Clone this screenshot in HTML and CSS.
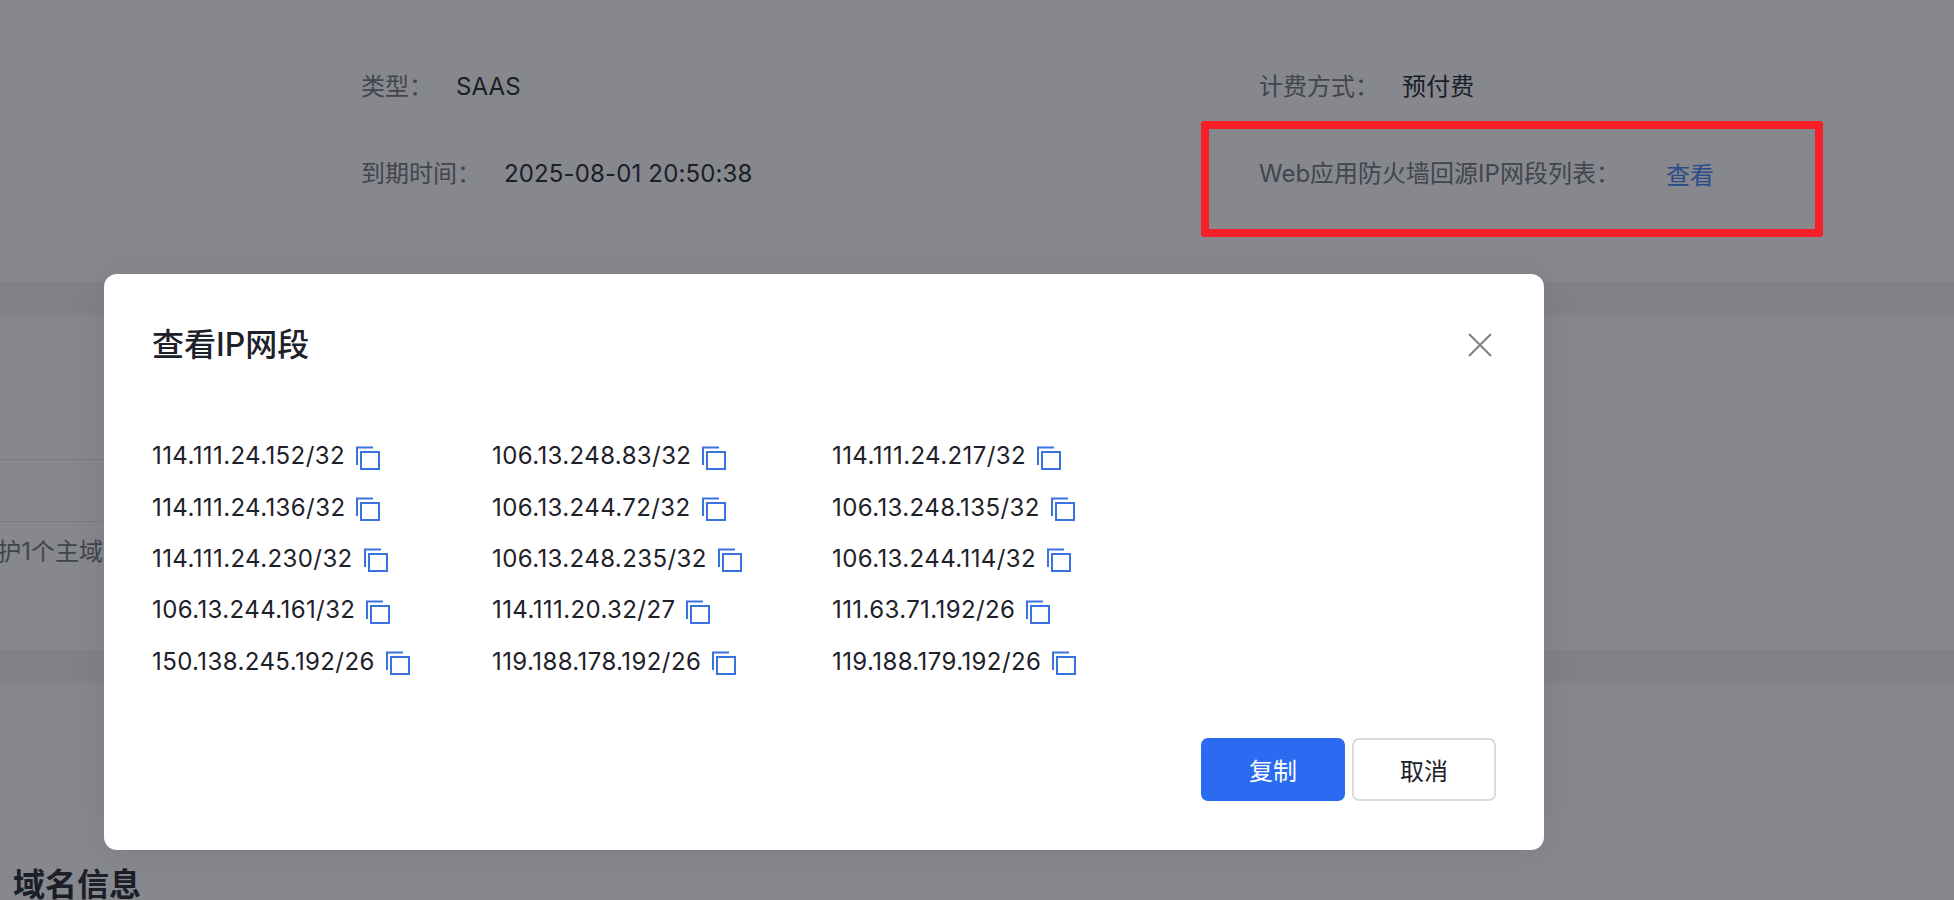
FILE: index.html
```html
<!DOCTYPE html>
<html lang="zh-CN">
<head>
  <meta charset="UTF-8" />
  <title>查看IP网段</title>
  <link rel="stylesheet" href="styles.css">
</head>
<body>
  <div class="page">
    <section class="info">
      <div class="info-row">
        <div class="info-item info-left"><span class="label label-short">类型：</span><span class="value">SAAS</span></div>
        <div class="info-item info-right"><span class="label label-billing">计费方式：</span><span class="value">预付费</span></div>
      </div>
      <div class="info-row">
        <div class="info-item info-left"><span class="label label-expire">到期时间：</span><span class="value">2025-08-01 20:50:38</span></div>
        <div class="info-item info-right"><span class="label label-web">Web应用防火墙回源IP网段列表：</span><a class="link">查看</a></div>
      </div>
    </section>
    <div class="band"></div>
    <section class="plan">
      <div class="plan-head"></div>
      <div class="plan-row"><span class="plan-text">护1个主域</span></div>
    </section>
    <div class="band"></div>
    <section class="domain">
      <h2 class="domain-title">域名信息</h2>
    </section>
  </div>

  <div class="mask"></div>

  <!-- red annotation from the screenshot -->
  <div class="highlight"></div>

  <div class="modal">
    <div class="modal-head">
      <h3 class="modal-title">查看IP网段</h3>
      <svg class="close" viewBox="0 0 24 24" width="24" height="24"><path d="M1 1L23 23M23 1L1 23" /></svg>
    </div>
    <div class="ip-grid" id="ip-grid"></div>
    <div class="modal-foot">
      <button class="btn btn-primary">复制</button>
      <button class="btn">取消</button>
    </div>
  </div>

  <script>
    const ips = [
      '114.111.24.152/32', '106.13.248.83/32', '114.111.24.217/32',
      '114.111.24.136/32', '106.13.244.72/32', '106.13.248.135/32',
      '114.111.24.230/32', '106.13.248.235/32', '106.13.244.114/32',
      '106.13.244.161/32', '114.111.20.32/27', '111.63.71.192/26',
      '150.138.245.192/26', '119.188.178.192/26', '119.188.179.192/26'
    ];
    const grid = document.getElementById('ip-grid');
    ips.forEach(function (ip) {
      const item = document.createElement('div');
      item.className = 'ip-item';
      item.innerHTML = '<span>' + ip + '</span>' +
        '<svg class="copy" viewBox="0 0 24 24" width="24" height="24">' +
        '<path d="M1 19V1.5H17" /><rect x="5" y="6" width="18" height="17" /></svg>';
      grid.appendChild(item);
    });
  </script>
</body>
</html>
```

FILE: styles.css
```css
* {
  box-sizing: border-box;
}
html, body {
  margin: 0;
  height: 100%;
}
body {
  width: 1954px;
  height: 900px;
  overflow: hidden;
  position: relative;
  background-color: #fff;
  font-family: Inter, 'Noto Sans CJK SC', sans-serif;
  font-size: 24px;
  color: #1d2129;
}
.page {
  height: 900px;
  overflow: hidden;
}
.info {
  height: 282px;
  padding-top: 52px;
  padding-left: 361px;
}
.info-row {
  display: flex;
  height: 87px;
  line-height: 70px;
}
.info-left {
  width: 898px;
}
.info-item {
  display: flex;
}
.label {
  color: #767981;
}
.value {
  color: #2b2b35;
  letter-spacing: 0.15px;
}
.label-short {
  width: 95px;
}
.label-expire {
  width: 143px;
}
.label-billing {
  width: 143px;
}
.label-web {
  width: 407px;
}
.link {
  padding-top: 2px;
  color: #4a86f5;
}
.band {
  height: 33px;
  background-color: #f2f2f3;
}
.plan {
  height: 335px;
}
.plan-head {
  width: 104px;
  height: 145px;
  border-bottom: 1px solid #e6e7e9;
}
.plan-row {
  display: flex;
  justify-content: flex-end;
  width: 103px;
  height: 62px;
  border-top: 1px solid #e6e7e9;
  margin-top: 61px;
  padding-top: 10px;
  white-space: nowrap;
  color: #767981;
}
.domain-title {
  margin: 0;
  padding: 176px 0 0 13px;
  font-size: 32px;
  font-weight: 600;
  color: #2b2b35;
}
.highlight {
  position: absolute;
  left: 1201px;
  top: 121px;
  width: 622px;
  height: 116px;
  border: 8px solid #f61f27;
  border-radius: 3px;
  z-index: 3;
}
.mask {
  position: absolute;
  inset: 0;
  background-color: rgba(13, 17, 27, 0.5);
  z-index: 2;
}
.modal {
  position: absolute;
  left: 104px;
  top: 274px;
  width: 1440px;
  height: 576px;
  padding: 0 48px;
  background-color: #fff;
  border-radius: 13px;
  box-shadow: 0 0 40px rgba(0, 0, 0, 0.08);
  z-index: 3;
}
.modal-head {
  display: flex;
  justify-content: space-between;
  align-items: center;
  height: 142px;
}
.modal-title {
  margin: 0 0 6px;
  font-size: 32px;
  font-weight: 500;
}
.close {
  margin-right: 4px;
}
.close path {
  stroke: #7d8086;
  stroke-width: 2;
  fill: none;
}
.ip-grid {
  display: grid;
  grid-template-columns: repeat(3, 340px);
  grid-auto-rows: 51.4px;
  height: 322px;
  padding-top: 14px;
}
.ip-item {
  display: flex;
  align-items: center;
  gap: 11px;
  letter-spacing: 0.4px;
}
.copy {
  flex: none;
  margin-top: 4px;
  fill: none;
  stroke: #3a72e0;
  stroke-width: 2;
}
.modal-foot {
  display: flex;
  justify-content: flex-end;
  gap: 7px;
}
.btn {
  width: 144px;
  height: 63px;
  border: 2px solid #d9dadc;
  border-radius: 7px;
  background-color: #fff;
  font-family: inherit;
  font-size: 24px;
  color: #1d2129;
}
.btn-primary {
  background-color: #2a6bf2;
  border-color: #2a6bf2;
  color: #fff;
}
```
